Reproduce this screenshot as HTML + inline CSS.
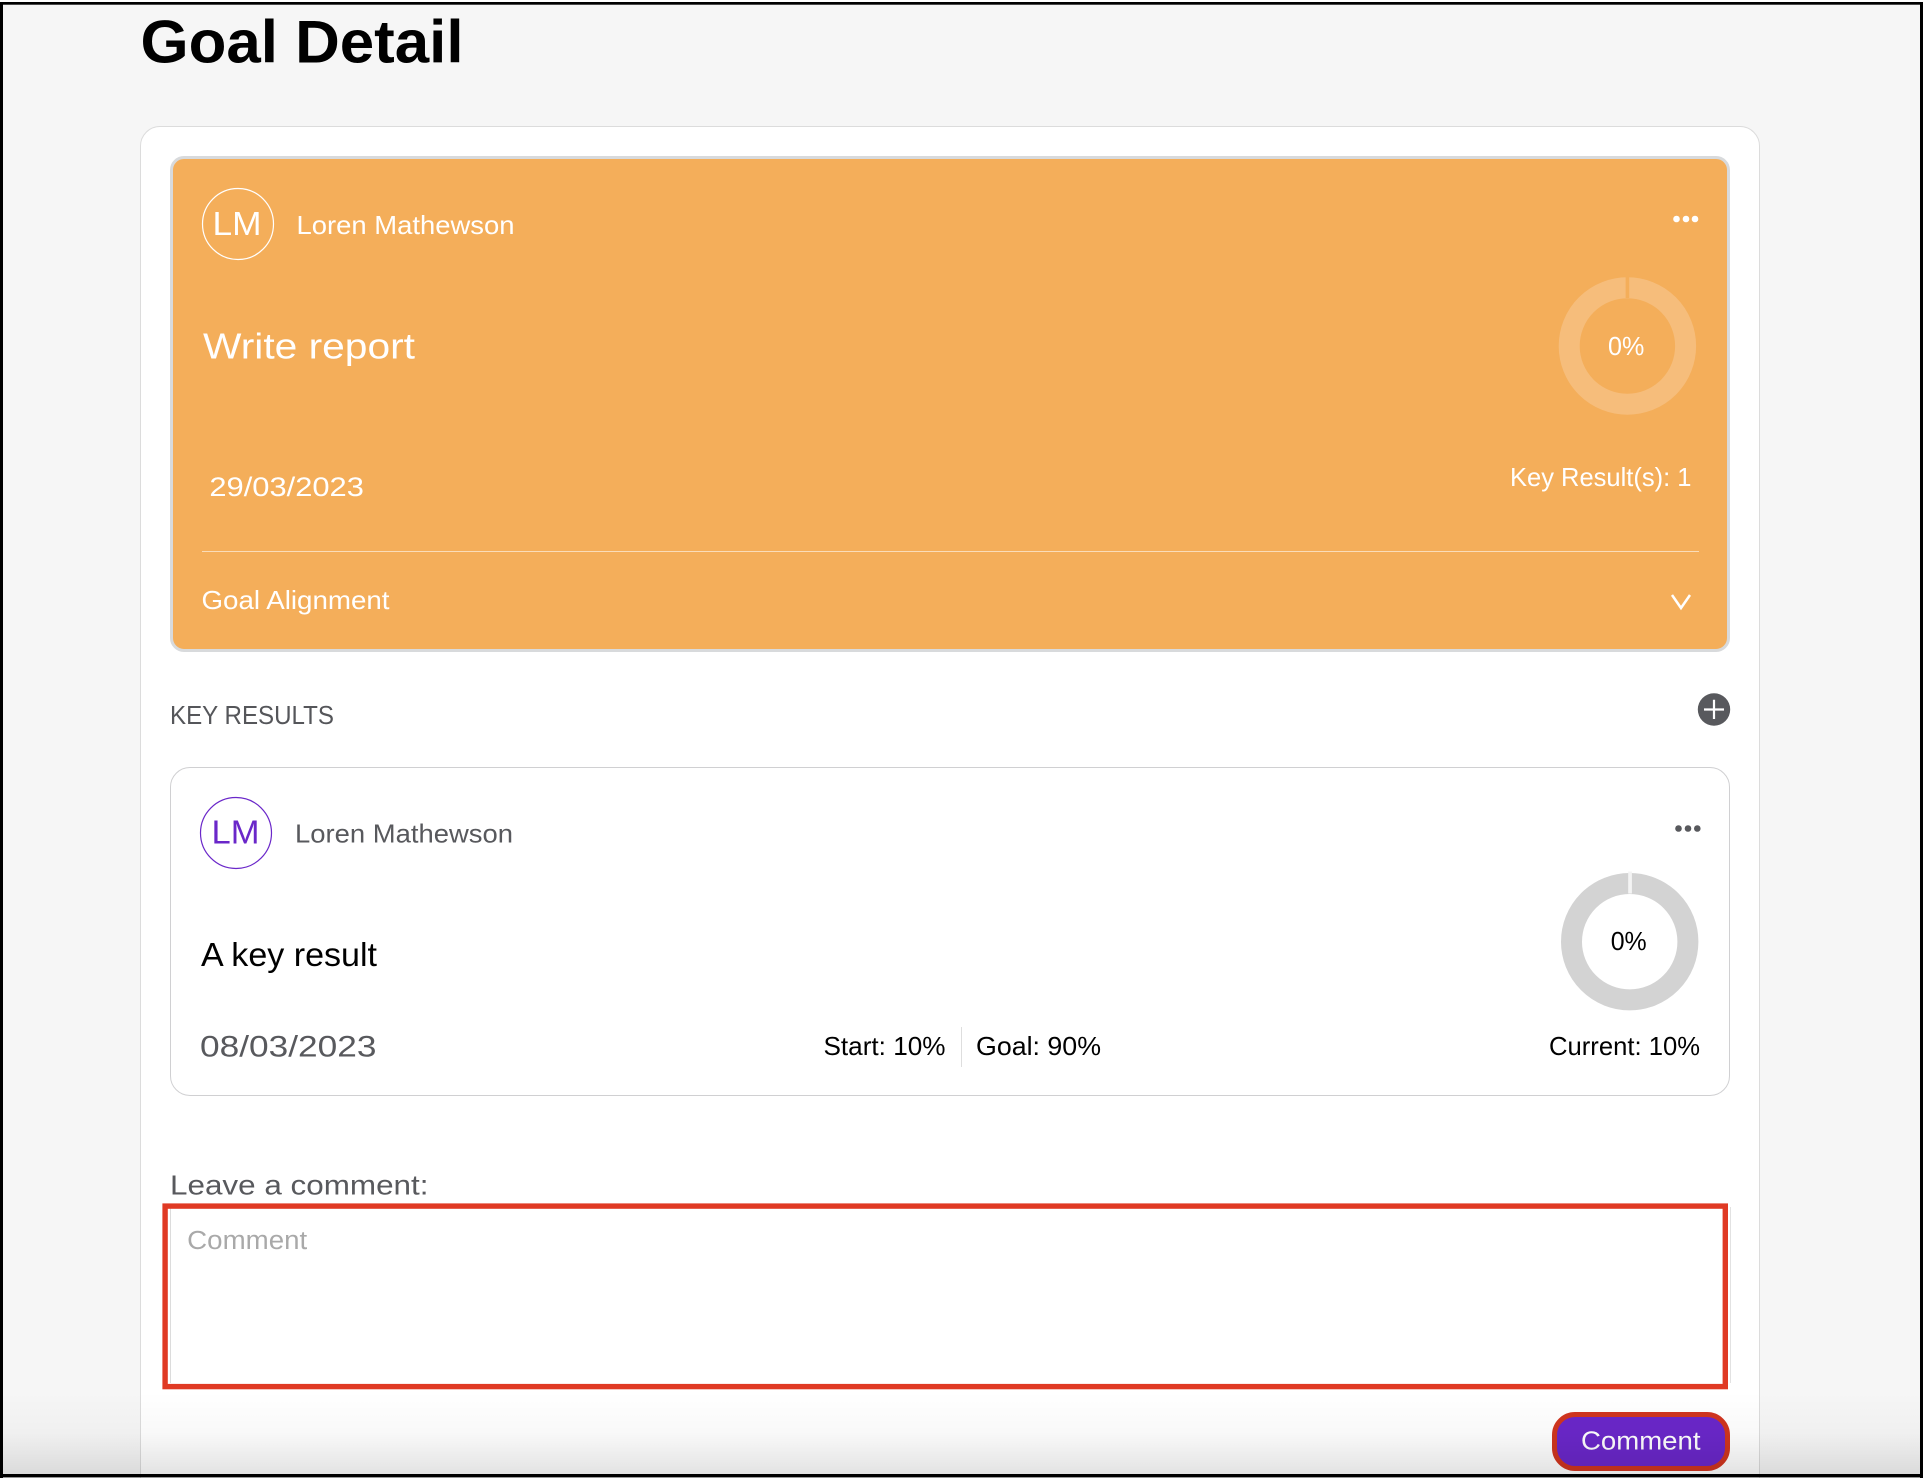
<!DOCTYPE html>
<html lang="en">
<head>
<meta charset="utf-8">
<title>Goal Detail</title>
<style>
html,body{margin:0;padding:0;width:1926px;height:1478px;overflow:hidden;background:#fff;}
#page{position:relative;width:1926px;height:1478px;overflow:hidden;background:#f6f6f6;}
.a{position:absolute;box-sizing:border-box;}
svg{position:absolute;left:0;top:0;}
text{font-family:"Liberation Sans",sans-serif;}
</style>
</head>
<body>
<div id="page">
<div class="a" style="left:140px;top:126px;width:1620px;height:1380px;background:#fff;border:1.5px solid #dcdcdc;border-radius:20px;"></div>
<div class="a" style="left:170px;top:156px;width:1560px;height:496px;background:#f4ae5a;border:3px solid #d8dadc;border-radius:14px;"></div>
<div class="a" style="left:170px;top:767px;width:1560px;height:329px;background:#fff;border:1.5px solid #d0d0d2;border-radius:20px;"></div>
<div class="a" style="left:169.5px;top:1207px;width:1px;height:176px;background:#dcdcdc;"></div>
<div class="a" style="left:1729.5px;top:1207px;width:1px;height:176px;background:#e2e2e2;"></div>
<div class="a" style="left:1552px;top:1412px;width:178px;height:59px;background:#6a27c9;border:5px solid #d0351f;border-radius:23px;"></div>

<svg width="1926" height="1478" viewBox="0 0 1926 1478" xmlns="http://www.w3.org/2000/svg">
  <rect x="165.1" y="1206.1" width="1560.2" height="180.5" fill="none" stroke="#e03a24" stroke-width="5.4"/>

  <text x="140.5" y="62.5" font-size="60" font-weight="700" fill="#000" textLength="323" lengthAdjust="spacingAndGlyphs">Goal Detail</text>

  <circle cx="238" cy="224" r="35.5" fill="none" stroke="#fff" stroke-width="1.2"/>
  <text x="212.5" y="235" font-size="33" fill="#fff" textLength="49" lengthAdjust="spacingAndGlyphs">LM</text>
  <text x="296.5" y="234" font-size="26" fill="#fff" textLength="218" lengthAdjust="spacingAndGlyphs">Loren Mathewson</text>
  <circle cx="1676.5" cy="219" r="3.3" fill="#fff"/>
  <circle cx="1686" cy="219" r="3.3" fill="#fff"/>
  <circle cx="1695" cy="219" r="3.3" fill="#fff"/>
  <text x="203" y="358.5" font-size="36" fill="#fff" textLength="212" lengthAdjust="spacingAndGlyphs">Write report</text>

  <circle cx="1627.4" cy="346" r="58.2" fill="none" stroke="#f6bd7b" stroke-width="21"/>
  <rect x="1625.6" y="276" width="3.6" height="22" fill="#f4ae5a"/>
  <text x="1608" y="355" font-size="26" fill="#fff" textLength="36.3" lengthAdjust="spacingAndGlyphs">0%</text>

  <text x="1510" y="486" font-size="26" fill="#fff" textLength="181.5" lengthAdjust="spacingAndGlyphs">Key Result(s): 1</text>
  <text x="209.4" y="496" font-size="26.5" fill="#fff" textLength="154.5" lengthAdjust="spacingAndGlyphs">29/03/2023</text>
  <rect x="202" y="551" width="1497" height="1" fill="#fadcb8"/>
  <text x="201.5" y="609" font-size="26" fill="#fff" textLength="188" lengthAdjust="spacingAndGlyphs">Goal Alignment</text>
  <path d="M1672 595 L1681 608 L1690 595" fill="none" stroke="#fff" stroke-width="2.5"/>

  <text x="170" y="724" font-size="25.5" fill="#55565a" textLength="164" lengthAdjust="spacingAndGlyphs">KEY RESULTS</text>
  <circle cx="1714" cy="709.5" r="16.2" fill="#58595d"/>
  <path d="M1704 709.5 H1724 M1714 699.8 V719" stroke="#fff" stroke-width="2.2" fill="none"/>

  <circle cx="236" cy="833" r="35.5" fill="none" stroke="#6a27c9" stroke-width="1.2"/>
  <text x="211.5" y="843.3" font-size="33" fill="#6a27c9" textLength="48" lengthAdjust="spacingAndGlyphs">LM</text>
  <text x="295" y="842.7" font-size="26" fill="#58595d" textLength="218" lengthAdjust="spacingAndGlyphs">Loren Mathewson</text>
  <circle cx="1678.5" cy="828.5" r="3.3" fill="#58595d"/>
  <circle cx="1688" cy="828.5" r="3.3" fill="#58595d"/>
  <circle cx="1697.3" cy="828.5" r="3.3" fill="#58595d"/>
  <text x="201" y="966" font-size="33" fill="#000" textLength="176" lengthAdjust="spacingAndGlyphs">A key result</text>

  <circle cx="1629.7" cy="941.7" r="58.2" fill="none" stroke="#d3d3d3" stroke-width="21"/>
  <rect x="1628.2" y="871.5" width="3.7" height="22" fill="#f4f4f4"/>
  <text x="1610.7" y="950" font-size="26" fill="#000" textLength="36" lengthAdjust="spacingAndGlyphs">0%</text>

  <text x="200" y="1056.5" font-size="30" fill="#58595d" textLength="176.5" lengthAdjust="spacingAndGlyphs">08/03/2023</text>
  <text x="823.5" y="1055" font-size="26" fill="#000" textLength="122" lengthAdjust="spacingAndGlyphs">Start: 10%</text>
  <rect x="961" y="1027" width="1" height="40" fill="#dedede"/>
  <text x="976" y="1055" font-size="26" fill="#000" textLength="125" lengthAdjust="spacingAndGlyphs">Goal: 90%</text>
  <text x="1549" y="1055" font-size="26" fill="#000" textLength="151" lengthAdjust="spacingAndGlyphs">Current: 10%</text>

  <text x="170" y="1194.7" font-size="27.5" fill="#58595d" textLength="258.5" lengthAdjust="spacingAndGlyphs">Leave a comment:</text>
  <text x="187.2" y="1249" font-size="25.5" fill="#a9a9a9" textLength="120" lengthAdjust="spacingAndGlyphs">Comment</text>
  <text x="1581" y="1449.7" font-size="26" fill="#fff" textLength="119.5" lengthAdjust="spacingAndGlyphs">Comment</text>

  <defs>
    <linearGradient id="fade" x1="0" y1="0" x2="0" y2="1">
      <stop offset="0" stop-color="#000" stop-opacity="0"/>
      <stop offset=".5" stop-color="#000" stop-opacity=".025"/>
      <stop offset="1" stop-color="#000" stop-opacity=".11"/>
    </linearGradient>
  </defs>
  <rect x="0" y="1392" width="1926" height="82" fill="url(#fade)"/>

  <rect x="0" y="0" width="1926" height="2" fill="#fff"/>
  <rect x="1923" y="0" width="3" height="1478" fill="#fff"/>
  <rect x="0" y="2" width="1923" height="2.7" fill="#000"/>
  <rect x="0" y="2" width="3" height="1476" fill="#000"/>
  <rect x="1920" y="2" width="3" height="1476" fill="#000"/>
  <rect x="0" y="1474" width="1923" height="3.4" fill="#000"/>
</svg>
</div>
</body>
</html>
